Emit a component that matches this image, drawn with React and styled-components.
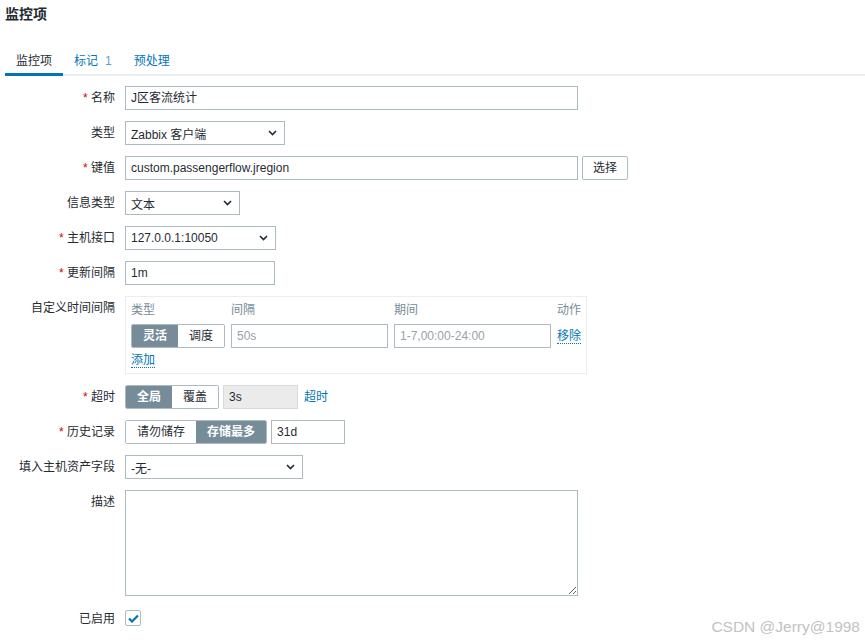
import styled, { createGlobalStyle } from 'styled-components'

const color = {
  text: '#1f2c33',
  link: '#0275b8',
  border: '#acbbc2',
  light: '#ebeef0',
  muted: '#768d99',
  required: '#d40000',
}

const GlobalStyle = createGlobalStyle`
body {
  margin: 0;
  background: #ffffff;
  font-family: "Liberation Sans", "Noto Sans CJK SC", sans-serif;
  font-size: 12px;
  color: ${color.text};
}
* {
  box-sizing: border-box;
}
`

const Page = styled.div`
position: relative;
width: 865px;
height: 642px;
padding-left: 5px;
overflow: hidden;
`

const Title = styled.h1`
margin: 0;
padding-top: 2px;
font-size: 14px;
line-height: 24px;
font-weight: bold;
`

const TabBar = styled.div`
display: flex;
margin-top: 20px;
border-bottom: 2px solid ${color.light};
`

const Tab = styled.div`
height: 30px;
padding: 3px 11px 0;
line-height: 24px;
margin-bottom: -2px;
border-bottom: 3px solid ${(p) => (p.$active ? color.link : 'transparent')};
color: ${(p) => (p.$active ? color.text : color.link)};
`

const Count = styled.span`
margin-left: 7px;
color: #5b9fcf;
`

const Form = styled.div`
display: flex;
flex-direction: column;
gap: 11px;
margin-top: 10px;
`

const Row = styled.div`
display: grid;
grid-template-columns: 110px 1fr;
column-gap: 10px;
align-items: start;
`

const Label = styled.div`
text-align: right;
line-height: 24px;
white-space: nowrap;
&::before {
  content: ${(p) => (p.$required ? '"* "' : '""')};
  color: ${color.required};
}
`

const Field = styled.div`
display: flex;
align-items: center;
gap: 4px;
`

const Input = styled.div`
width: ${(p) => p.$w}px;
height: 24px;
padding: 0 5px;
line-height: 22px;
border: 1px solid ${(p) => (p.$disabled ? '#d6dbde' : color.border)};
background: ${(p) => (p.$disabled ? '#ebebeb' : '#ffffff')};
color: ${(p) => (p.$placeholder ? '#97a3a9' : color.text)};
white-space: nowrap;
overflow: hidden;
`

const SelectBox = styled.div`
display: flex;
align-items: center;
justify-content: space-between;
width: ${(p) => p.$w}px;
height: 24px;
padding: 0 7px 0 5px;
border: 1px solid ${color.border};
background: #ffffff;
`

const Button = styled.div`
height: 24px;
padding: 0 10px;
line-height: 22px;
border: 1px solid ${color.border};
border-radius: 2px;
background: #ffffff;
`

const Segments = styled.div`
display: flex;
height: 24px;
border: 1px solid ${color.border};
border-radius: 2px;
overflow: hidden;
`

const Segment = styled.div`
padding: 0 11px;
line-height: 22px;
background: ${(p) => (p.$on ? color.muted : '#ffffff')};
color: ${(p) => (p.$on ? '#ffffff' : color.text)};
font-weight: ${(p) => (p.$on ? 600 : 'normal')};
`

const Link = styled.span`
color: ${color.link};
line-height: 16px;
border-bottom: ${(p) => (p.$dotted ? `1px dotted ${color.link}` : 'none')};
`

const IntervalBox = styled.div`
width: 462px;
padding: 5px 5px 4px;
border: 1px solid ${color.light};
`

const IntervalGrid = styled.div`
display: grid;
grid-template-columns: 94px 157px 157px auto;
column-gap: 6px;
align-items: center;
`

const ColHead = styled.div`
padding-bottom: 5px;
color: ${color.muted};
line-height: 17px;
`

const AddRow = styled.div`
grid-column: 1 / -1;
padding-top: 3px;
line-height: 18px;
`

const TextArea = styled.textarea`
display: block;
width: 453px;
height: 106px;
margin: 0;
border: 1px solid ${color.border};
font: inherit;
resize: both;
`

const Check = styled.div`
display: flex;
align-items: center;
justify-content: center;
width: 16px;
height: 16px;
margin-top: 3px;
border: 1px solid ${color.border};
border-radius: 2px;
background: #ffffff;
`

const Watermark = styled.div`
position: absolute;
right: 5px;
bottom: 6px;
font-family: "Liberation Sans", Arial, sans-serif;
font-size: 15.5px;
color: #c2c2c2;
`

function Chevron() {
  return (
    <svg width="9" height="6" viewBox="0 0 9 6">
      <path d="M1 1l3.5 3.5L8 1" fill="none" stroke={color.text} strokeWidth="1.6" />
    </svg>
  )
}

function Select({ w, children }) {
  return (
    <SelectBox $w={w}>
      <span>{children}</span>
      <Chevron />
    </SelectBox>
  )
}

function FormRow({ label, required, children }) {
  return (
    <Row>
      <Label $required={required}>{label}</Label>
      <div>{children}</div>
    </Row>
  )
}

export default function App() {
  return (
    <Page>
      <GlobalStyle />
      <Title>监控项</Title>
      <TabBar>
        <Tab $active>监控项</Tab>
        <Tab>标记<Count>1</Count></Tab>
        <Tab>预处理</Tab>
      </TabBar>

      <Form>
        <FormRow label="名称" required>
          <Input $w={453}>J区客流统计</Input>
        </FormRow>
        <FormRow label="类型">
          <Select w={160}>Zabbix 客户端</Select>
        </FormRow>
        <FormRow label="键值" required>
          <Field>
            <Input $w={453}>custom.passengerflow.jregion</Input>
            <Button>选择</Button>
          </Field>
        </FormRow>
        <FormRow label="信息类型">
          <Select w={115}>文本</Select>
        </FormRow>
        <FormRow label="主机接口" required>
          <Select w={151}>127.0.0.1:10050</Select>
        </FormRow>
        <FormRow label="更新间隔" required>
          <Input $w={150}>1m</Input>
        </FormRow>
        <FormRow label="自定义时间间隔">
          <IntervalBox>
            <IntervalGrid>
              <ColHead>类型</ColHead>
              <ColHead>间隔</ColHead>
              <ColHead>期间</ColHead>
              <ColHead>动作</ColHead>
              <Segments>
                <Segment $on>灵活</Segment>
                <Segment>调度</Segment>
              </Segments>
              <Input $w={157} $placeholder>50s</Input>
              <Input $w={157} $placeholder>1-7,00:00-24:00</Input>
              <div><Link $dotted>移除</Link></div>
              <AddRow><Link $dotted>添加</Link></AddRow>
            </IntervalGrid>
          </IntervalBox>
        </FormRow>
        <FormRow label="超时" required>
          <Field>
            <Segments>
              <Segment $on>全局</Segment>
              <Segment>覆盖</Segment>
            </Segments>
            <Input $w={75} $disabled>3s</Input>
            <Link style={{ marginLeft: 2 }}>超时</Link>
          </Field>
        </FormRow>
        <FormRow label="历史记录" required>
          <Field>
            <Segments>
              <Segment>请勿储存</Segment>
              <Segment $on>存储最多</Segment>
            </Segments>
            <Input $w={74}>31d</Input>
          </Field>
        </FormRow>
        <FormRow label="填入主机资产字段">
          <Select w={178}>-无-</Select>
        </FormRow>
        <FormRow label="描述">
          <TextArea />
        </FormRow>
        <FormRow label="已启用">
          <Check>
            <svg width="11" height="9" viewBox="0 0 11 9">
              <path d="M1 4.5l3 3L10 1.5" fill="none" stroke={color.link} strokeWidth="2.2" />
            </svg>
          </Check>
        </FormRow>
      </Form>

      <Watermark>CSDN @Jerry@1998</Watermark>
    </Page>
  )
}
